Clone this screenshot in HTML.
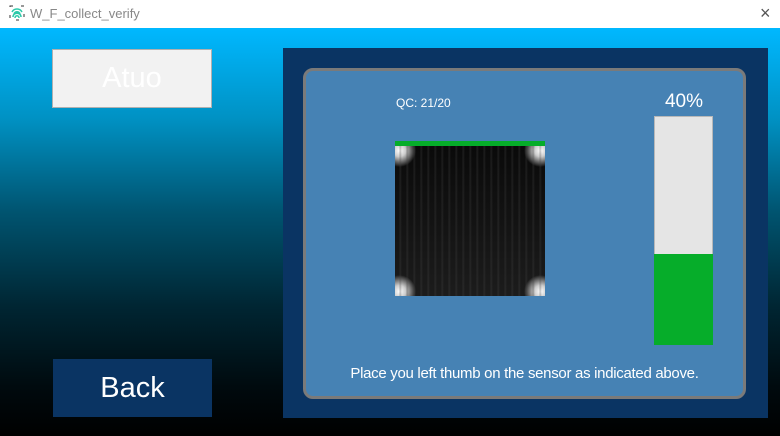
<!DOCTYPE html>
<html><head><style>
*{margin:0;padding:0;box-sizing:border-box}
body{width:780px;height:436px;overflow:hidden;font-family:"Liberation Sans",sans-serif;background:#000;position:relative}
.title{position:absolute;left:0;top:0;width:780px;height:28px;background:#fff;color:#888;font-size:13px}
.bg{position:absolute;left:0;top:28px;width:780px;height:408px;background:linear-gradient(#00b8ff 0%,#0092c4 22%,#005470 45%,#002633 68%,#000a0e 88%,#000 100%)}
.abs{position:absolute}
</style></head><body>
<div class="title">
 <svg class="abs" style="left:9px;top:5px" width="16" height="16" viewBox="0 0 16 16"><rect x="1" y="1" width="14" height="14" fill="none" stroke="#333" stroke-width="1" stroke-dasharray="3 8"/><path d="M4 12c0-5 8-5 8 0M5 9c1-3 5-3 6 0M6 13c0-3 4-3 4 0M3 7c2-4 8-4 10 0" stroke="#2cc9a9" stroke-width="1.5" fill="none"/></svg>
 <span class="abs" style="left:30px;top:6px">W_F_collect_verify</span>
 <span class="abs" style="left:760px;top:3px;font-size:18px;color:#555">×</span>
</div>
<div class="bg"></div>
<div class="abs" style="left:52px;top:49px;width:160px;height:59px;background:#f2f2f2;border:1px solid #b0b0b0;color:#fff;font-size:29px;text-align:center;line-height:57px">Atuo</div>
<div class="abs" style="left:53px;top:359px;width:159px;height:58px;background:#0a3463;color:#fff;font-size:29px;text-align:center;line-height:58px">Back</div>
<div class="abs" style="left:283px;top:48px;width:485px;height:370px;background:#0a3463"></div>
<div class="abs" style="left:303px;top:68px;width:443px;height:331px;background:#4682b4;border:3px solid #7a7a7a;border-radius:10px"></div>
<div class="abs" style="left:396px;top:96px;color:#fff;font-size:12px">QC: 21/20</div>
<div class="abs" style="left:395px;top:141px;width:150px;height:5px;background:#06ad2a"></div>
<div class="abs" style="left:395px;top:146px;width:150px;height:150px;background:radial-gradient(circle at 3% 3%,#fff 0,#ccc 3%,transparent 8%),radial-gradient(circle at 97% 3%,#fff 0,#ccc 3%,transparent 8%),radial-gradient(circle at 3% 97%,#fff 0,#ccc 3%,transparent 8%),radial-gradient(circle at 97% 97%,#fff 0,#ccc 3%,transparent 8%),linear-gradient(#0a0a0a 0,#111 40%,#1c1c1c 100%),#111"></div>
<div class="abs" style="left:395px;top:146px;width:150px;height:150px;opacity:.35;background:repeating-linear-gradient(90deg,transparent 0,transparent 4px,#444 5px,transparent 7px)"></div>
<div class="abs" style="left:640px;top:91px;width:88px;text-align:center;color:#fff;font-size:19px">40%</div>
<div class="abs" style="left:654px;top:116px;width:59px;height:229px;background:#e5e5e5;border:1px solid #b8b8b8"></div>
<div class="abs" style="left:654px;top:254px;width:59px;height:91px;background:#06ad2a"></div>
<div class="abs" style="left:306px;top:365px;width:437px;text-align:center;color:#fff;font-size:15px;letter-spacing:-0.3px">Place you left thumb on the sensor as indicated above.</div>
</body></html>
